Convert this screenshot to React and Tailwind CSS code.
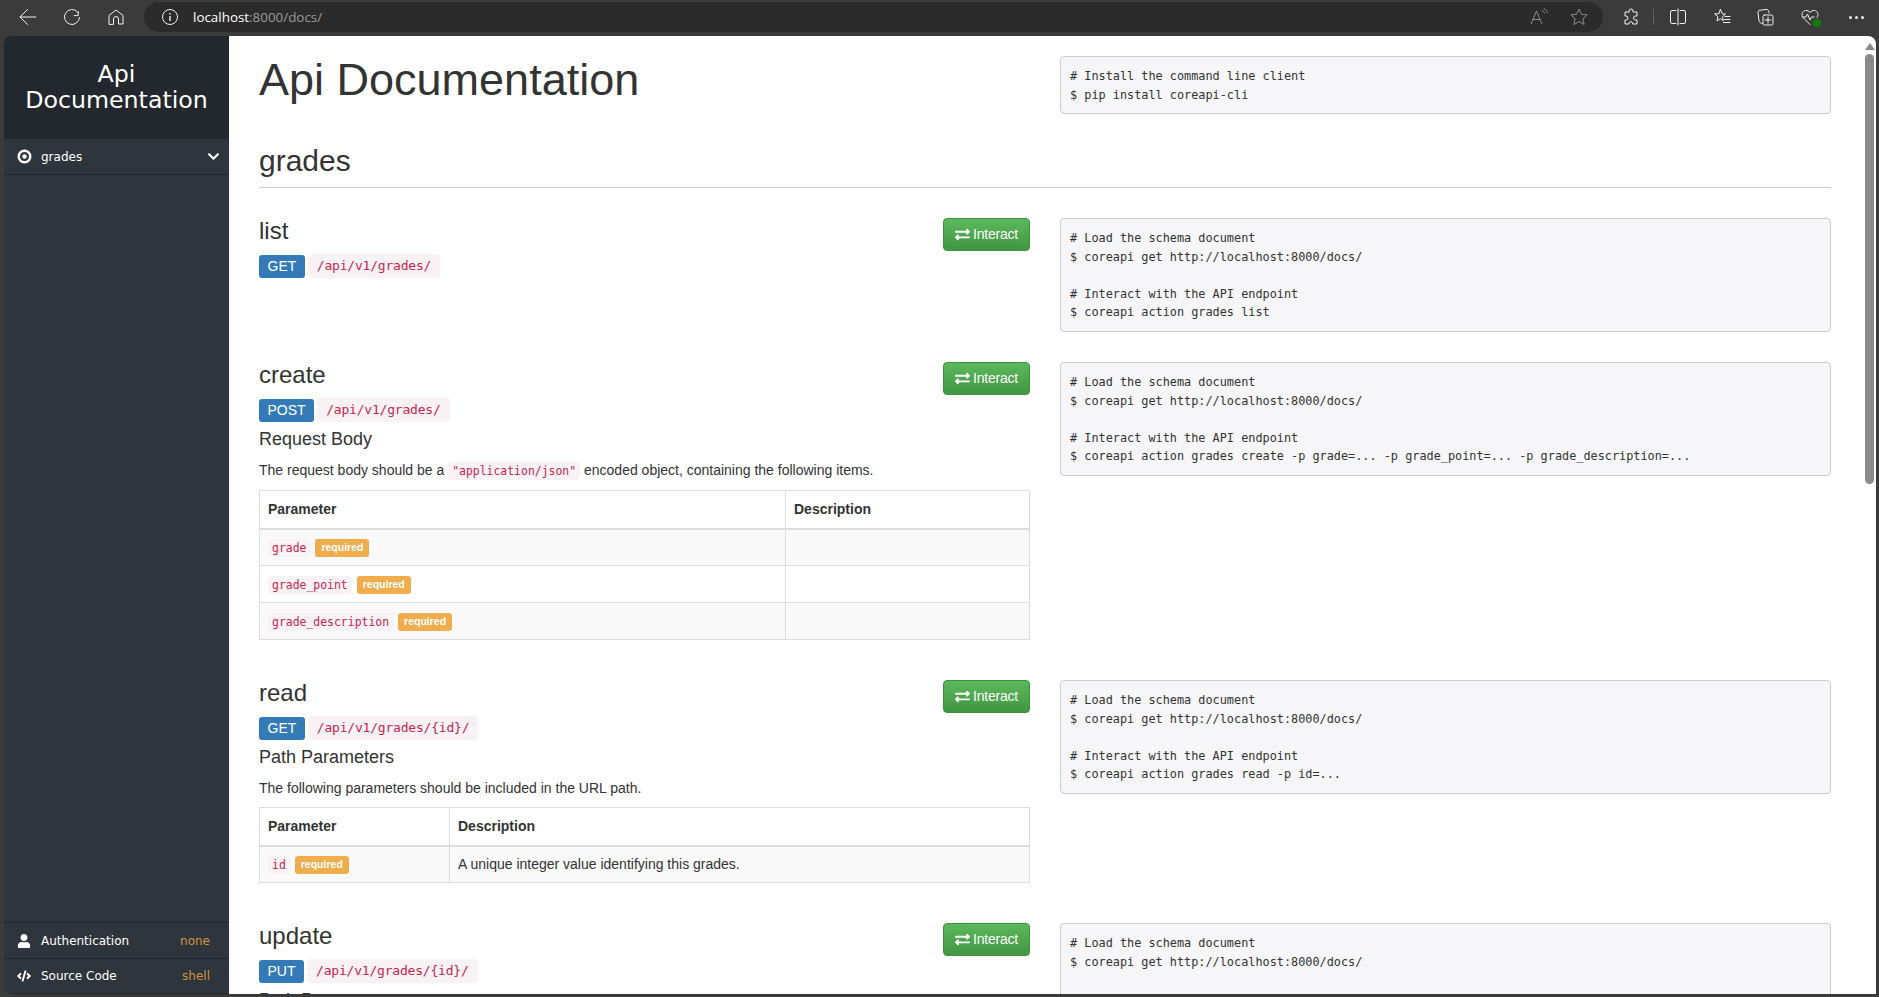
import React from 'react';
import { FaExchangeAlt, FaUser, FaCode, FaChevronDown } from 'react-icons/fa';

const LOAD = '# Load the schema document\n$ coreapi get http://localhost:8000/docs/\n\n# Interact with the API endpoint\n';

const ToolIcon = ({ className, children }) => (
  <div className={`flex items-center justify-center w-[44px] h-[34px] shrink-0 ${className || ''}`}>
    <svg width="20" height="20" viewBox="0 0 20 20" fill="none" stroke="currentColor" strokeWidth="1" strokeLinecap="round" strokeLinejoin="round">
      {children}
    </svg>
  </div>
);

const BrowserBar = () => (
  <div className="h-[36px] shrink-0 flex items-center bg-[#3b3b3b] text-[#f0f0f0] pl-[6px] pb-[2px]">
    <ToolIcon><path d="M18 10H2M9.5 2.5 2 10l7.5 7.5" /></ToolIcon>
    <ToolIcon><path d="M16.2 4.6v4h-4M17.500 10.500A7.500 7.500 0 1 1 15.600 5l.6.6" /></ToolIcon>
    <ToolIcon><path d="M3 17V8.500L10 3l7 5.500V17h-4.500v-5a2.500 2.500 0 0 0-5 0v5Z" /></ToolIcon>
    <div className="ml-[6px] w-[1459px] h-[30px] rounded-full bg-[#2b2b2b] flex items-center shrink-0 pl-[16px] pr-[14px]">
      <svg width="20" height="20" viewBox="0 0 20 20" fill="none" stroke="currentColor" strokeWidth="1">
        <circle cx="10" cy="10" r="7.500" />
        <path d="M10 9v5M10 6v1.400" strokeWidth="1.400" />
      </svg>
      <div className="ml-[13px] text-[13.4px] font-['Open_Sans',sans-serif] text-white">
        localhost<span className="text-[#9a9a9a]">:8000/docs/</span>
      </div>
      <div className="ml-auto flex items-center gap-[20px] text-[#8c8c8c]">
        <svg width="20" height="20" viewBox="0 0 20 20" fill="none" stroke="currentColor" strokeWidth="1">
          <path d="M2 17 7.500 4l5.500 13M4 12.500h7" />
          <path d="M13 3.500c1.500.6 2.300 1.600 2.600 3M14.800 1.600c2.200.9 3.300 2.400 3.700 4.500" />
        </svg>
        <svg width="20" height="20" viewBox="0 0 20 20" fill="none" stroke="currentColor" strokeWidth="1" strokeLinejoin="round">
          <path d="m10 2 2.400 5.300 5.800.6-4.300 3.900 1.200 5.700L10 14.600l-5.100 2.900 1.200-5.700L1.800 7.900l5.800-.6Z" />
        </svg>
      </div>
    </div>
    <ToolIcon className="ml-[6px]"><path d="M8 4a2 2 0 0 1 4 0v1h4v4h-1.500a2 2 0 0 0 0 4H16v4h-4.500v-1a1.800 1.800 0 0 0-3.500 0v1H4v-4h1a2 2 0 0 0 0-4H4V5h4Z" /></ToolIcon>
    <div className="w-px h-[16px] bg-[#626262] shrink-0" />
    <ToolIcon className="ml-[2px]"><path d="M8 3.500H4a1.500 1.500 0 0 0-1.500 1.500v10A1.500 1.500 0 0 0 4 16.500h4M12 3.500h4A1.500 1.500 0 0 1 17.500 5v10a1.500 1.500 0 0 1-1.500 1.500h-4M10 2v16" /></ToolIcon>
    <ToolIcon><path d="m8.500 2.500 1.800 4.300 3.200.2-3 2.700.8 4-2.800-2-3.500 2.200.9-4.200-3.400-2.800 4.200-.2ZM13 9.500h5M12.500 12.500h5.500M11.500 15.500h6.500" /></ToolIcon>
    <ToolIcon><path d="M6.500 16.500c-2 0-3-1-3.500-3L2 6c-.2-1.500.5-2.500 2-2.800L10 2.500c1.500-.2 2.500.5 2.800 2l.2 1.500M8.500 8h7A1.500 1.500 0 0 1 17 9.500v7a1.500 1.500 0 0 1-1.500 1.500h-7A1.500 1.500 0 0 1 7 16.500v-7A1.500 1.500 0 0 1 8.500 8ZM12 10v6M9 13h6" /></ToolIcon>
    <div className="relative shrink-0">
      <ToolIcon><path d="M10 17.500 3 10.500C1 8 2 4 5.500 3.500 7.500 3.200 9 4.500 10 5.500c1-1 2.500-2.300 4.500-2 3.500.5 4.500 4.500 2.500 7M2.500 10H6l1.500-3 2.500 6 1.500-3H14" /></ToolIcon>
      <div className="absolute left-[25px] top-[19px] w-[8px] h-[8px] rounded-full bg-[#107c10]" />
    </div>
    <div className="ml-[17px] text-[#f0f0f0] flex gap-[3px] shrink-0">
      <div className="w-[3px] h-[3px] bg-current rounded-full" />
      <div className="w-[3px] h-[3px] bg-current rounded-full" />
      <div className="w-[3px] h-[3px] bg-current rounded-full" />
    </div>
  </div>
);

const SideRow = ({ icon, label, value, border }) => (
  <div className={`h-[36px] flex items-center pl-[13px] pr-[19px] text-white text-[12px] font-['DejaVu_Sans',sans-serif] border-[#23282e] ${border}`}>
    <span className="w-[18px] text-[14px] flex items-center">{icon}</span>
    <span className="ml-[6px]">{label}</span>
    <span className="ml-auto text-[#cf9240]">{value}</span>
  </div>
);

const Sidebar = () => (
  <div className="w-[225px] shrink-0 bg-[#2e353d] flex flex-col rounded-tl-[8px] rounded-bl-[8px] overflow-hidden">
    <div className="h-[103px] bg-[#23282e] flex items-center justify-center text-center text-white text-[23.7px] leading-[26px] font-['DejaVu_Sans',sans-serif] px-[10px] pb-[2px]">
      Api Documentation
    </div>
    <div className="h-[36px] flex items-center pl-[13px] pr-[9px] text-white text-[12px] font-['DejaVu_Sans',sans-serif] border-b border-[#23282e]">
      <svg width="15" height="15" viewBox="0 0 15 15" className="shrink-0">
        <circle cx="7.500" cy="7.500" r="5.800" fill="none" stroke="currentColor" strokeWidth="2.400" />
        <circle cx="7.500" cy="7.500" r="2.200" fill="currentColor" />
      </svg>
      <span className="ml-[9px]">grades</span>
      <FaChevronDown className="ml-auto text-[13px]" />
    </div>
    <div className="flex-1" />
    <SideRow icon={<FaUser />} label="Authentication" value="none" border="border-t" />
    <SideRow icon={<FaCode />} label="Source Code" value="shell" border="border-t border-b" />
  </div>
);

const Code = ({ children }) => (
  <code className="font-['DejaVu_Sans_Mono',monospace] text-[11.45px] text-[#c7254e] bg-[#f9f2f4] rounded-[4px] px-[4px] py-[2px]">
    {children}
  </code>
);

const Method = ({ method, path }) => (
  <div className="flex items-center gap-[3px] h-[24px] mt-[3px]">
    <span className="h-[23px] flex items-center px-[8.500px] rounded-[3px] bg-[#337ab7] text-white text-[14px]">{method}</span>
    <span className="h-[24px] flex items-center px-[9px] rounded-[4px] bg-[#f9f2f4] text-[#c7254e] text-[13px] font-['DejaVu_Sans_Mono',monospace] tracking-[-0.2px]">{path}</span>
  </div>
);

const Interact = () => (
  <button className="h-[33px] w-[87px] flex items-center justify-center gap-[3px] rounded-[4px] border border-[#3e8f3e] bg-linear-to-b from-[#5cb85c] to-[#419641] text-white text-[14px] tracking-[-0.2px]">
    <FaExchangeAlt className="text-[15px]" />
    Interact
  </button>
);

const CodeBox = ({ text }) => (
  <pre className="h-fit border border-[#ccc] rounded-[4px] bg-[#f6f6f8] px-[9px] pt-[10px] pb-[9px] text-[#333] font-['DejaVu_Sans_Mono',monospace] text-[11.85px] leading-[18.500px]">
    {text}
  </pre>
);

const Required = () => (
  <span className="inline-block ml-[5px] h-[18px] leading-[17px] px-[6px] rounded-[3px] bg-[#f0ad4e] text-white text-[10.500px] font-bold align-middle">required</span>
);

const ParamTable = ({ firstCol, rows }) => (
  <table className="w-full border-collapse table-fixed text-[14px] text-[#333] mt-[9px]">
    <thead>
      <tr className="h-[38px]">
        <th className={`border border-[#ddd] border-b-2 text-left font-bold px-[8px] ${firstCol}`}>Parameter</th>
        <th className="border border-[#ddd] border-b-2 text-left font-bold px-[8px]">Description</th>
      </tr>
    </thead>
    <tbody>
      {rows.map((row, i) => (
        <tr key={row.name} className={`h-[37px] ${i % 2 === 0 ? 'bg-[#f9f9f9]' : ''}`}>
          <td className="border border-[#ddd] px-[8px]"><Code>{row.name}</Code><Required /></td>
          <td className="border border-[#ddd] px-[8px]">{row.description}</td>
        </tr>
      ))}
    </tbody>
  </table>
);

// one endpoint: title, button and method on the left, shell sample on the right
const Section = ({ title, method, path, code, rowClass, children }) => (
  <div className={`grid grid-cols-[771px_771px] gap-x-[30px] ${rowClass || ''}`}>
    <div>
      <div className="flex justify-between items-start">
        <h3 className="text-[24px] leading-[26px] text-[#333]">{title}</h3>
        <Interact />
      </div>
      <Method method={method} path={path} />
      {children}
    </div>
    <CodeBox text={code} />
  </div>
);

const SubTitle = ({ children }) => (
  <h4 className="text-[18px] leading-[20px] text-[#333] mt-[7px]">{children}</h4>
);

const Intro = ({ children }) => (
  <p className="text-[14px] leading-[20px] text-[#333] mt-[11px]">{children}</p>
);

export default function App() {
  return (
    <div className="w-[1879px] h-[997px] bg-[#3b3b3b] flex flex-col overflow-hidden">
      <BrowserBar />
      <div className="h-[958px] flex pl-[4px] pr-[3px]">
        <Sidebar />
        <div className="flex-1 min-w-0 bg-white overflow-hidden pl-[30px] font-['Liberation_Sans',sans-serif]">
          <div className="grid grid-cols-[771px_771px] gap-x-[30px] pt-[20px] h-[108px]">
            <h1 className="text-[45px] leading-[42px] text-[#333] pt-[3px]">Api Documentation</h1>
            <CodeBox text={'# Install the command line client\n$ pip install coreapi-cli'} />
          </div>
          <h2 className="w-[1572px] text-[30px] leading-[33px] text-[#333] pb-[10px] border-b border-[#ccc]">grades</h2>
          <div className="pt-[30px]">
            <Section rowClass="h-[144px]" title="list" method="GET" path="/api/v1/grades/" code={LOAD + '$ coreapi action grades list'} />
            <Section rowClass="h-[318px]" title="create" method="POST" path="/api/v1/grades/" code={LOAD + '$ coreapi action grades create -p grade=... -p grade_point=... -p grade_description=...'}>
              <SubTitle>Request Body</SubTitle>
              <Intro>The request body should be a <Code>"application/json"</Code> encoded object, containing the following items.</Intro>
              <ParamTable firstCol="w-[526px]" rows={[{ name: 'grade' }, { name: 'grade_point' }, { name: 'grade_description' }]} />
            </Section>
            <Section rowClass="h-[243px]" title="read" method="GET" path="/api/v1/grades/{id}/" code={LOAD + '$ coreapi action grades read -p id=...'}>
              <SubTitle>Path Parameters</SubTitle>
              <Intro>The following parameters should be included in the URL path.</Intro>
              <ParamTable firstCol="w-[190px]" rows={[{ name: 'id', description: 'A unique integer value identifying this grades.' }]} />
            </Section>
            <Section title="update" method="PUT" path="/api/v1/grades/{id}/" code={LOAD + '$ coreapi action grades update -p id=...'}>
              <SubTitle>Path Parameters</SubTitle>
            </Section>
          </div>
        </div>
        <div className="w-[13px] shrink-0 bg-white rounded-tr-[8px]">
          <div className="mx-auto mt-[7px] w-0 h-0 border-x-[5px] border-x-transparent border-b-[7px] border-b-[#8a8a8a]" />
          <div className="mx-auto mt-[4px] w-[9px] h-[430px] rounded-full bg-[#8a8a8a]" />
        </div>
      </div>
    </div>
  );
}
